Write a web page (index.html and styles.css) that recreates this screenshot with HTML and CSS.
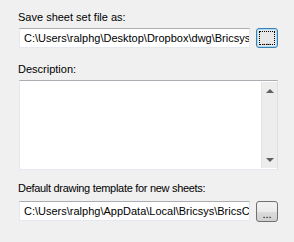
FILE: index.html
```html
<!DOCTYPE html>
<html lang="en">
<head>
  <meta charset="UTF-8" />
  <title>Sheet Set Properties</title>
  <link rel="stylesheet" href="styles.css">
</head>
<body>
  <div class="panel">
    <label class="caption">Save sheet set file as:</label>
    <div class="fileRow">
      <div class="field">C:\Users\ralphg\Desktop\Dropbox\dwg\Bricsys</div>
      <button class="browse focused"><span class="dots">...</span></button>
    </div>

    <label class="caption descCaption">Description:</label>
    <div class="memo">
      <div class="memoText"></div>
      <div class="scroll">
        <span class="arrow up"></span>
        <span class="arrow down"></span>
      </div>
    </div>

    <label class="caption tplCaption">Default drawing template for new sheets:</label>
    <div class="fileRow">
      <div class="field">C:\Users\ralphg\AppData\Local\Bricsys\BricsCA</div>
      <button class="browse"><span class="dots">...</span></button>
    </div>
  </div>
</body>
</html>
```

FILE: styles.css
```css
* {
  margin: 0;
  padding: 0;
  box-sizing: border-box;
}

body {
  background: #f0f0f0;
  font-family: 'Liberation Sans', Arial, sans-serif;
  font-size: 11px;
  color: #000;
  width: 294px;
  height: 242px;
  overflow: hidden;
}

.panel {
  display: flex;
  flex-direction: column;
  padding: 10px 16px 0 19px;
}

.caption {
  display: block;
  height: 14px;
  line-height: 14px;
  margin-left: -1px;
  margin-bottom: 4px;
}

.descCaption {
  margin-top: 13px;
}

.tplCaption {
  margin-top: 11px;
  margin-bottom: 6px;
  letter-spacing: -0.3px;
}

.fileRow {
  display: flex;
  align-items: flex-start;
  gap: 6px;
  height: 21px;
}

.field {
  width: 231px;
  height: 20px;
  background: #fff;
  border: 1px solid #e3e9ef;
  border-top-color: #abadb3;
  padding: 0 0 0 4px;
  line-height: 18px;
  white-space: nowrap;
  overflow: hidden;
}

/* browse buttons */
.browse {
  position: relative;
  width: 22px;
  height: 21px;
  border: 1px solid #707070;
  border-radius: 3px;
  background: linear-gradient(to bottom, #f2f2f2 0%, #ebebeb 50%, #dddddd 51%, #cfcfcf 100%);
  font-family: inherit;
  font-size: 11px;
  color: #000;
}

.dots {
  display: block;
  line-height: 12px;
  padding-top: 5px;
  text-align: center;
}

.browse.focused {
  height: 20px;
  border-color: #3c7fb1;
  box-shadow: inset 0 0 0 1px #a8dcf5;
  background: #e8e8e8;
}

.browse.focused::before {
  content: '';
  position: absolute;
  inset: 2px;
  border: 1px dotted #000;
}

.memo {
  display: flex;
  width: 259px;
  height: 90px;
  background: #fff;
  border: 1px solid #e3e9ef;
  border-top-color: #abadb3;
  border-right-color: #dbdfe6;
}

.memoText {
  flex: 1;
}

.scroll {
  width: 16px;
  margin: 1px 0;
  background: #ededed;
  border-left: 1px solid #e3e3e3;
  display: flex;
  flex-direction: column;
  justify-content: space-between;
  align-items: center;
  padding: 7px 0 6px;
}

.arrow {
  width: 0;
  height: 0;
  border-left: 4px solid transparent;
  border-right: 4px solid transparent;
}

.arrow.up {
  border-bottom: 4px solid #606060;
}

.arrow.down {
  border-top: 4px solid #606060;
}
```
